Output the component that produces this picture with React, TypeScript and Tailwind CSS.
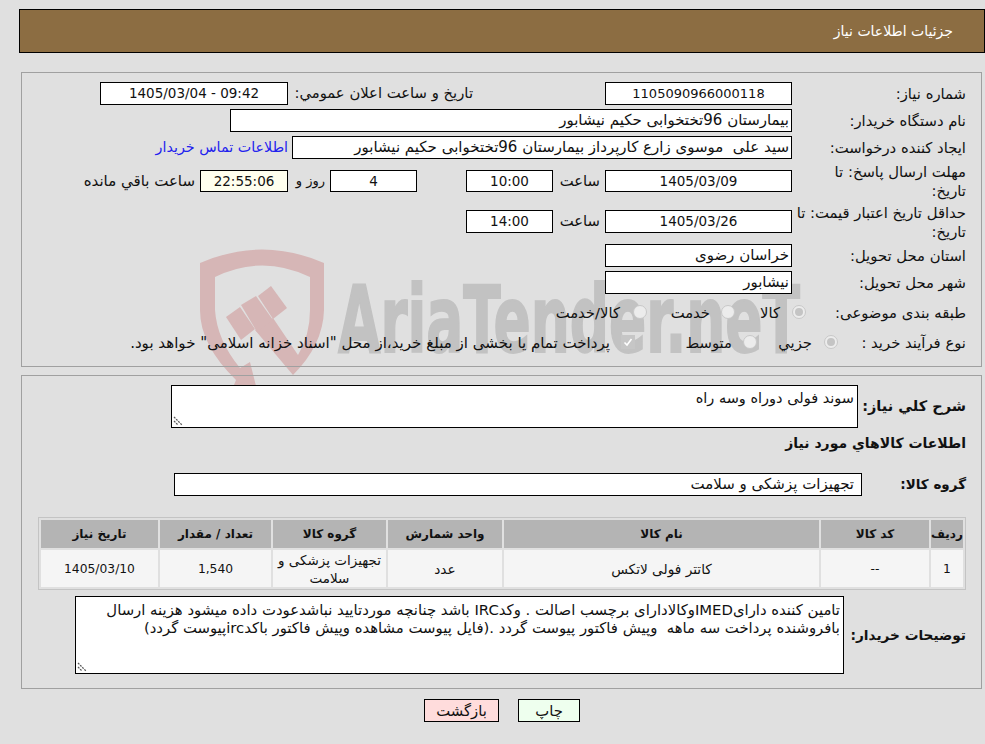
import React from "react";

function Box({ w, h = "h-[23px]", bg = "bg-white", start, num = "text-[15px]", children }: { w: string; h?: string; bg?: string; start?: boolean; num?: string; children?: React.ReactNode }) {
  return (
    <div className={`${w} ${h} ${bg} ${num} shrink-0 border border-black flex items-center whitespace-pre ${start ? "justify-start pr-[2px]" : "justify-center"}`}>
      {children}
    </div>
  );
}

function Label({ children }: { children: React.ReactNode }) {
  return <div className="w-[174px] shrink-0 leading-[19px]">{children}</div>;
}

function Radio({ on }: { on?: boolean }) {
  return (
    <span className="w-[14px] h-[14px] shrink-0 rounded-full border border-[#c8c8c8] bg-[#ececec] flex items-center justify-center -mt-[3px]">
      {on && <span className="w-[8px] h-[8px] rounded-full bg-[#c4c4c4]" />}
    </span>
  );
}

function Grip() {
  return (
    <svg className="absolute left-[2px] bottom-[2px] pointer-events-none" width="10" height="10" viewBox="0 0 10 10" fill="none">
      <path d="M1 1 L9 9 M1 5 L5 9" stroke="#5a5a5a" strokeWidth="1.3" strokeDasharray="2 1" />
    </svg>
  );
}

function Watermark() {
  return (
    <svg className="absolute left-0 top-0 w-[985px] h-[744px]" viewBox="0 0 985 744" fill="none">
      <path
        fill="#d6b6b6"
        d="M200 263 Q262 236 324 263 L324 310 Q323 345 293 375 L255 330 L273 318 L298 355 Q310 335 310 310 L310 277 Q262 254 215 277 L215 310 Q217 340 240 368 L250 362 L257 390 L232 390 L236 380 Q200 345 200 310 Z"
      />
      <path fill="#d6b6b6" d="M226 317 L240 307 L255 329 L241 340 Z" />
      <path fill="#d6b6b6" d="M241 305 L256 296 L273 320 L257 332 Z" />
      <path fill="#d6b6b6" d="M258 296 L271 286 L287 308 L273 319 Z" />
      <text
        x="338"
        y="352"
        fill="#c2c2c2"
        stroke="#c2c2c2"
        strokeWidth="2"
        fontFamily="'DejaVu Sans', sans-serif"
        fontWeight="700"
        fontSize="92"
        textLength="462"
        lengthAdjust="spacingAndGlyphs"
        direction="ltr"
      >
        AriaTender.neT
      </text>
    </svg>
  );
}

const rows = [
  ["رديف", "w-[32px]"],
  ["کد کالا", "w-[108px]"],
  ["نام کالا", "w-[315px]"],
  ["واحد شمارش", "w-[114px]"],
  ["گروه کالا", "w-[113px]"],
  ["تعداد / مقدار", "w-[111px]"],
  ["تاریخ نیاز", "w-[117px]"],
];
const cells = [
  ["1", "text-[12.3px]"],
  ["--", "text-[12.3px]"],
  ["کاتتر فولی لاتکس", "text-[13.7px]"],
  ["عدد", "text-[13.7px]"],
  ["تجهیزات پزشکی و سلامت", "text-[13.5px]"],
  ["1,540", "text-[12.3px]"],
  ["1405/03/10", "text-[12.3px]"],
];

const note =
  "تامین کننده دارایIMEDوکالادارای برچسب اصالت . وکدIRC باشد چنانچه موردتایید نباشدعودت داده میشود هزینه ارسال\nبافروشنده پرداخت سه ماهه  وپیش فاکتور پیوست گردد .(فایل پیوست مشاهده وپیش فاکتور باکدircپیوست گردد)";

export default function App() {
  return (
    <div className="relative w-[985px] h-[744px] overflow-hidden bg-[#e0e0e0] text-[#111] text-[14.8px] font-['DejaVu_Sans','Noto_Sans',sans-serif]">
      <Watermark />
      <div dir="rtl" className="relative flex flex-col items-start pt-[9px]">
        <header className="w-[966px] h-[44px] bg-[#8c6d42] border border-black flex items-center pr-[31px] text-white text-[14px]">
          جزئیات اطلاعات نیاز
        </header>

        <section className="w-[961px] h-[295px] mt-[19px] mr-[3px] border border-[#a0a0a0] pt-[9px] pr-[15px]">
          <div className="flex items-center">
            <Label>شماره نیاز:</Label>
            <Box w="w-[187px]" num="text-[13px]">1105090966000118</Box>
            <div className="w-[317px] shrink-0 pr-[132px] whitespace-nowrap">تاریخ و ساعت اعلان عمومي:</div>
            <Box w="w-[188px]" num="text-[13.5px]"><span dir="ltr">1405/03/04 - 09:42</span></Box>
          </div>
          <div className="flex items-center mt-[4px]">
            <Label>نام دستگاه خریدار:</Label>
            <Box w="w-[562px]" start>بیمارستان 96تختخوابی حکیم نیشابور</Box>
          </div>
          <div className="flex items-center mt-[4px]">
            <Label>ایجاد کننده درخواست:</Label>
            <Box w="w-[500px]" start>سید علی  موسوی زارع کارپرداز بیمارستان 96تختخوابی حکیم نیشابور</Box>
            <a className="mr-[4px] text-[#2222ee] whitespace-nowrap text-[14.3px]">اطلاعات تماس خریدار</a>
          </div>
          <div className="flex items-center h-[22px] mt-[11px]">
            <Label>مهلت ارسال پاسخ: تا<br />تاریخ:</Label>
            <Box w="w-[187px]" h="h-[22px]" num="text-[13.5px]">1405/03/09</Box>
            <div className="w-[52px] shrink-0 pr-[5px]">ساعت</div>
            <Box w="w-[87px]" h="h-[22px]" num="text-[13.5px]">10:00</Box>
            <div className="w-[49px] shrink-0" />
            <Box w="w-[87px]" h="h-[22px]" num="text-[13.5px]">4</Box>
            <div className="w-[42px] shrink-0 pr-[5px] text-[13px]">روز و</div>
            <Box w="w-[88px]" h="h-[22px]" bg="bg-[#ffffee]" num="text-[13.5px]">22:55:06</Box>
            <div className="pr-[5px] whitespace-nowrap text-[15px]">ساعت باقي مانده</div>
          </div>
          <div className="flex items-center h-[23px] mt-[18px]">
            <Label>حداقل تاریخ اعتبار قیمت: تا<br />تاریخ:</Label>
            <Box w="w-[187px]" num="text-[13.5px]">1405/03/26</Box>
            <div className="w-[52px] shrink-0 pr-[5px]">ساعت</div>
            <Box w="w-[87px]" num="text-[13.5px]">14:00</Box>
          </div>
          <div className="flex items-center mt-[11px]">
            <Label>استان محل تحویل:</Label>
            <Box w="w-[187px]" start>خراسان رضوی</Box>
          </div>
          <div className="flex items-center mt-[4px]">
            <Label>شهر محل تحویل:</Label>
            <Box w="w-[187px]" start>نیشابور</Box>
          </div>
          <div className="flex items-center h-[20px] mt-[9px]">
            <div className="w-[160px] shrink-0 whitespace-nowrap">طبقه بندی موضوعی:</div>
            <div className="w-[71px] shrink-0 flex items-center gap-[12px]"><Radio on /><span>کالا</span></div>
            <div className="w-[88px] shrink-0 flex items-center gap-[11px]"><Radio /><span>خدمت</span></div>
            <div className="flex items-center gap-[13px]"><Radio /><span>کالا/خدمت</span></div>
          </div>
          <div className="flex items-center h-[20px] mt-[10px]">
            <div className="w-[128px] shrink-0 whitespace-nowrap">نوع فرآیند خرید :</div>
            <div className="w-[81px] shrink-0 flex items-center gap-[12px]"><Radio on /><span>جزيي</span></div>
            <div className="w-[122px] shrink-0 flex items-center gap-[11px]"><Radio /><span>متوسط</span></div>
            <div className="flex items-center gap-[11px] whitespace-nowrap">
              <span className="w-[14px] h-[14px] shrink-0 bg-[#c6c6c6] flex items-center justify-center -mt-[3px]">
                <svg width="10" height="10" viewBox="0 0 10 10" fill="none"><path d="M1.5 5.5 L4 8 L8.5 2" stroke="#fff" strokeWidth="1.6" /></svg>
              </span>
              <span className="text-[15.05px]">پرداخت تمام يا بخشی از مبلغ خرید،از محل "اسناد خزانه اسلامی" خواهد بود.</span>
            </div>
          </div>
        </section>

        <section className="w-[961px] h-[314px] mt-[8px] mr-[3px] border border-[#a0a0a0] pt-[9px] pr-[15px]">
          <div className="flex items-center">
            <div className="w-[108px] shrink-0 font-bold text-[14.5px] whitespace-nowrap">شرح کلي نياز:</div>
            <div className="relative w-[687px] h-[43px] shrink-0">
              <textarea
                readOnly
                defaultValue="سوند فولی دوراه وسه راه"
                className="block w-full h-full resize-none bg-white border border-black px-[3px] py-[3px] text-[14.5px] leading-[19px] outline-none"
              />
              <Grip />
            </div>
          </div>
          <div className="mt-[6px] h-[19px] font-bold text-[14px] leading-[19px]">اطلاعات کالاهاي مورد نياز</div>
          <div className="flex items-center mt-[20px]">
            <div className="w-[104px] shrink-0 font-bold text-[13.5px]">گروه کالا:</div>
            <Box w="w-[688px]" start><span className="pr-[5px]">تجهیزات پزشکی و سلامت</span></Box>
          </div>
          <table className="mt-[21px] w-[928px] table-fixed border-separate border-spacing-[2px] border border-[#c4c4c4]">
            <thead>
              <tr>
                {rows.map(([t, w]) => (
                  <th key={t} className={`${w} h-[28px] p-0 bg-[#b4b4b4] font-bold text-center text-[12px]`}>{t}</th>
                ))}
              </tr>
            </thead>
            <tbody>
              <tr>
                {cells.map(([c, f], i) => (
                  <td key={i} className={`${f} h-[37px] p-0 px-[4px] bg-[#f5f5f5] text-center leading-[18px]`}>{c}</td>
                ))}
              </tr>
            </tbody>
          </table>
          <div className="flex items-center mt-[6px]">
            <div className="w-[122px] shrink-0 font-bold text-[13.7px] whitespace-nowrap">توضیحات خریدار:</div>
            <div className="relative w-[769px] h-[78px] shrink-0">
              <textarea
                readOnly
                defaultValue={note}
                wrap="off"
                className="block w-full h-full resize-none overflow-hidden bg-white border border-black px-[3px] py-[4px] text-[14.85px] leading-[18px] outline-none"
              />
              <Grip />
            </div>
          </div>
        </section>

        <div className="flex mt-[10px] mr-[405px] gap-[19px]">
          <button className="w-[62px] h-[23px] bg-[#eeffee] border border-black">چاپ</button>
          <button className="w-[75px] h-[23px] bg-[#ffdcdc] border border-black">بازگشت</button>
        </div>
      </div>
    </div>
  );
}
